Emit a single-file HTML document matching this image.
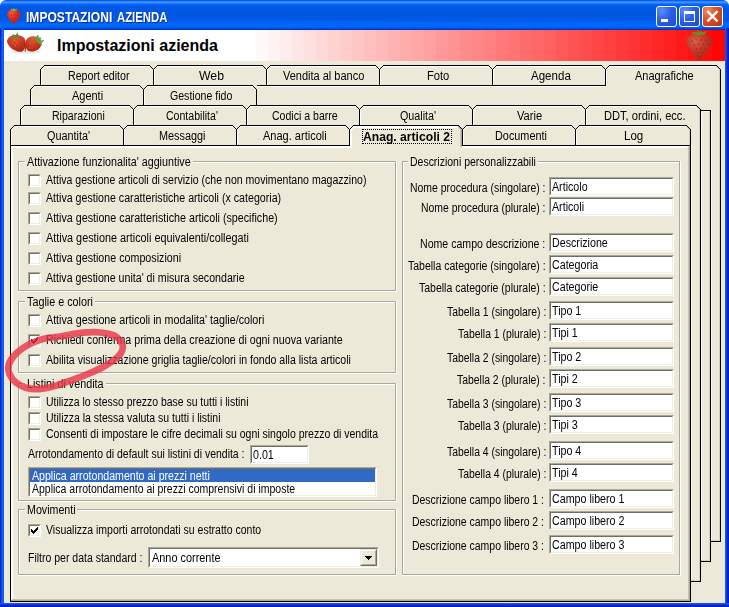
<!DOCTYPE html>
<html lang="it">
<head>
<meta charset="utf-8">
<title>IMPOSTAZIONI AZIENDA</title>
<style>
html,body{margin:0;padding:0;background:#fff;}
body{width:729px;height:607px;overflow:hidden;position:relative;font-family:"Liberation Sans",sans-serif;font-size:12px;color:#000;}
#win{position:absolute;left:0;top:0;width:729px;height:607px;overflow:hidden;border-radius:6px 6px 0 0;background:#ECE9D8;}
#tb{position:absolute;left:0;top:0;width:729px;height:30px;background:linear-gradient(to bottom,#0044D4 0px,#2E86FC 1.5px,#3C93FF 2.5px,#0A6AFF 4px,#0059E8 6px,#0057E0 12px,#0059E6 20px,#0066FA 23px,#0068FC 26px,#005AF0 28px,#0036C4 29.5px,#0030BE 30px);}
#bl,#br{position:absolute;top:28px;width:4px;height:579px;}
#bl{left:0;background:linear-gradient(to right,#0019CF 0,#0831D9 1px,#166AEE 2px,#0855DD 4px);}
#br{left:725px;background:linear-gradient(to right,#1C62EC 0,#0A3EDC 1.5px,#0021C4 3px,#001AB0 4px);}
#bb{position:absolute;left:0;top:603px;width:729px;height:4px;background:linear-gradient(to bottom,#1C62EC 0,#0A3EDC 1.5px,#0021C4 3px,#001AB0 4px);}
#hd{position:absolute;left:4px;top:30px;width:721px;height:31px;background:linear-gradient(to right,#fff 0,#fff 240px,#FFFFFF 240px,#FFFFFF 252px,#FFF9F9 252px,#FFF9F9 264px,#FFF2F2 264px,#FFF2F2 276px,#FFECEC 276px,#FFECEC 288px,#FFE6E6 288px,#FFE6E6 300px,#FFDFDF 300px,#FFDFDF 312px,#FFD9D9 312px,#FFD9D9 324px,#FFD2D2 324px,#FFD2D2 336px,#FFCCCC 336px,#FFCCCC 348px,#FFC6C6 348px,#FFC6C6 360px,#FFBFBF 360px,#FFBFBF 372px,#FFB9B9 372px,#FFB9B9 384px,#FFB2B2 384px,#FFB2B2 396px,#FFACAC 396px,#FFACAC 408px,#FFA6A6 408px,#FFA6A6 420px,#FF9F9F 420px,#FF9F9F 432px,#FF9999 432px,#FF9999 444px,#FF9393 444px,#FF9393 456px,#FF8C8C 456px,#FF8C8C 468px,#FF8686 468px,#FF8686 480px,#FF8080 480px,#FF8080 492px,#FF7979 492px,#FF7979 504px,#FF7373 504px,#FF7373 516px,#FF6C6C 516px,#FF6C6C 528px,#FF6666 528px,#FF6666 540px,#FF6060 540px,#FF6060 552px,#FF5959 552px,#FF5959 564px,#FF5353 564px,#FF5353 576px,#FF4D4D 576px,#FF4D4D 588px,#FF4646 588px,#FF4646 600px,#FF4040 600px,#FF4040 612px,#FF3939 612px,#FF3939 624px,#FF3333 624px,#FF3333 636px,#FF2D2D 636px,#FF2D2D 648px,#FF2626 648px,#FF2626 660px,#FF2020 660px,#FF2020 672px,#FF1919 672px,#FF1919 684px,#FF1313 684px,#FF1313 696px,#FF0D0D 696px,#FF0D0D 708px,#FF0606 708px,#FF0606 720px,#FF0000 720px,#FF0000 721px);}
.t{position:absolute;white-space:nowrap;line-height:16px;height:16px;transform-origin:0 50%;}
#ttl{position:absolute;left:26px;top:8px;line-height:18px;font-size:14px;font-weight:bold;color:#fff;white-space:nowrap;text-shadow:1px 1px 0 #0A2A8C;}
#h1{position:absolute;left:57px;top:35px;line-height:22px;font-size:16px;font-weight:bold;white-space:nowrap;}
.ln{position:absolute;left:0;top:0;}
.cb{position:absolute;width:11px;height:11px;background:#fff;border:1px solid;border-color:#ACA899 #fff #fff #ACA899;}
.cb::before{content:"";position:absolute;left:0;top:0;right:0;bottom:0;border:1px solid;border-color:#716F64 #F1EFE2 #F1EFE2 #716F64;}
.in{position:absolute;background:#fff;border:1px solid;border-color:#ACA899 #fff #fff #ACA899;}
.in::before{content:"";position:absolute;left:0;top:0;right:0;bottom:0;border:1px solid;border-color:#716F64 #F1EFE2 #F1EFE2 #716F64;}
.btn{position:absolute;width:15px;height:15px;background:#ECE9D8;border:1px solid;border-color:#ECE9D8 #716F64 #716F64 #ECE9D8;}
.btn::before{content:"";position:absolute;left:0;top:0;right:0;bottom:0;border:1px solid;border-color:#fff #ACA899 #ACA899 #fff;}
.wb{position:absolute;top:6px;width:19px;height:19px;border:1px solid #fff;border-radius:3px;background:radial-gradient(circle at 25% 20%,#5A8CFF 0,#2C5FE6 45%,#1F48C8 100%);}
#wc{background:radial-gradient(circle at 25% 20%,#F08A62 0,#D9512C 45%,#B8300C 100%);}
</style>
</head>
<body>
<div id="win">
<div id="tb"></div>
<div id="bl"></div><div id="br"></div><div id="bb"></div>
<div id="hd"></div>
<!-- title icon : strawberry -->
<svg style="position:absolute;left:6px;top:7px" width="16" height="18" viewBox="0 0 16 18">
<defs><radialGradient id="s0" cx="35%" cy="20%" r="85%"><stop offset="0" stop-color="#EC5A3A"/><stop offset=".5" stop-color="#D82C1C"/><stop offset="1" stop-color="#B41C10"/></radialGradient></defs>
<path d="M1.2 6.8C1 4.4 3 3 5 3.2C6.2 3.3 7 3.8 7.6 4.2C8.4 3.6 9.6 3.2 11 3.3C13.2 3.5 14.5 5.2 14.3 7.2C14.1 9.6 13.2 11.2 11.8 13C10.6 14.6 9 16.2 7.8 17.2C6.4 16.2 5 14.8 3.8 13.2C2.4 11.4 1.4 9.2 1.2 6.8Z" fill="url(#s0)"/>
<path d="M4 3.2L5.8 1.6L6.8 2.6L7.6 0.8L8.8 2.6L10.8 1.4L10.6 3.4C9.4 3.4 8.4 3.8 7.6 4.4C6.6 3.6 5.4 3.2 4 3.2Z" fill="#B0A030"/>
<g fill="#8E1408" opacity=".7"><rect x="5" y="8" width="1" height="1"/><rect x="8" y="7" width="1" height="1"/><rect x="11" y="8" width="1" height="1"/><rect x="6.5" y="11" width="1" height="1"/><rect x="9.5" y="10.5" width="1" height="1"/><rect x="8" y="13.5" width="1" height="1"/></g>
</svg>
<div id="ttl"><span style="position:absolute;left:0;top:0;transform-origin:0 50%;transform:scaleX(0.8624)">IMPOSTAZIONI</span> <span style="position:absolute;left:90.6px;top:0;transform-origin:0 50%;transform:scaleX(0.8100)">AZIENDA</span></div>
<div class="wb" style="left:656px"><div style="position:absolute;left:4px;top:12px;width:7px;height:3px;background:#fff"></div></div>
<div class="wb" style="left:679px"><div style="position:absolute;left:4px;top:4px;width:9px;height:7px;border:1px solid #fff;border-top-width:3px"></div></div>
<div class="wb" id="wc" style="left:702px"><svg width="19" height="19" viewBox="0 0 19 19" style="position:absolute;left:0;top:0"><path d="M5.2 5L13.8 13.6M13.8 5L5.2 13.6" stroke="#fff" stroke-width="2.3" stroke-linecap="square"/></svg></div>
<!-- header strawberries -->
<svg style="position:absolute;left:5px;top:31px" width="42" height="24" viewBox="0 0 42 24">
<defs><radialGradient id="s1" cx="45%" cy="15%" r="85%"><stop offset="0" stop-color="#E2583A"/><stop offset=".5" stop-color="#CC3A22"/><stop offset="1" stop-color="#A82816"/></radialGradient></defs>
<ellipse cx="21" cy="21" rx="15" ry="1.8" fill="#DCD8D0" opacity=".6"/>
<path d="M2 10.5C2.2 6.5 6 4 11 4C16 4 20.5 6.5 20.8 11C21 15 19.8 19.6 16.5 20.8C12 21.4 3.5 17.5 2 10.5Z" fill="url(#s1)"/>
<path d="M21 9.2C23 5.6 28 4.4 31.6 6C35 7.6 37 11 36 14.6C35 18.2 31 20.6 27 20.6C23.6 20.6 21.2 19.2 20.9 16C20.7 13.2 20.5 11 21 9.2Z" fill="url(#s1)"/>
<path d="M19.2 12C20.8 14 21 18 20 20.4" stroke="#8E1C0E" stroke-width="1.3" fill="none" opacity=".8"/>
<path d="M3.5 7.6L6.6 6L8 2.8L10 5L12.6 1.6L13.4 4.6L15 5.6C12 6 10.5 8 9.5 7C7.5 6.2 5.5 7.8 3.5 7.6Z" fill="#5E8A32"/>
<path d="M28.6 6.2L31.6 5.6L32.8 3.4L34 6.4L36.6 6.8L35.2 9.4L39.6 9L36.4 12L37.6 15L34.4 12.8C32.8 12.6 30.6 10.6 30.4 8.6Z" fill="#6E9838"/>
<g fill="#8C1C0E" opacity=".7"><rect x="14.5" y="11" width="1" height="1"/><rect x="16.5" y="13" width="1" height="1"/><rect x="15" y="15" width="1" height="1"/><rect x="17.5" y="10.5" width="1" height="1"/><rect x="16" y="17" width="1" height="1"/></g>
<g fill="#EE7A58" opacity=".8"><rect x="9" y="9" width="1" height="1"/><rect x="11.5" y="11" width="1" height="1"/><rect x="7" y="12" width="1" height="1"/><rect x="10" y="14" width="1" height="1"/><rect x="24.5" y="12" width="1" height="1"/><rect x="26.5" y="14.5" width="1" height="1"/><rect x="24" y="16.5" width="1" height="1"/><rect x="28" y="11" width="1" height="1"/></g>
</svg>
<div id="h1">Impostazioni azienda</div>
<!-- big strawberry right -->
<svg style="position:absolute;left:685px;top:29px" width="30" height="33" viewBox="0 0 30 33">
<defs><radialGradient id="sg" cx="35%" cy="25%" r="80%"><stop offset="0" stop-color="#D8604A"/><stop offset=".45" stop-color="#C43A2A"/><stop offset="1" stop-color="#A82618"/></radialGradient></defs>
<path d="M1.2 11.5C1.5 7.5 5 5.4 9 5.8C11.5 6 13 6.8 14 7.4C15.5 6.4 18 5.6 20.5 6C24.5 6.6 27.2 9.5 27 13C26.8 17 24 21 21 24.5C18.5 27.5 16 30 14 31.8C11.5 30 8.5 26.5 6 22.5C3.5 18.5 1 15 1.2 11.5Z" fill="url(#sg)"/>
<path d="M6 4.6L9.5 2.6L11.5 3.4L12.5 1L14.5 3.2L16 1.2L17.6 3.6L21.5 1.8L20 5.6C17.5 5.4 16 6.2 14 7.2C12 6 9 5.6 6 4.6Z" fill="#6C8A2C"/>
<g fill="#8A1C10" opacity=".75"><circle cx="7" cy="12" r=".7"/><circle cx="11" cy="10.5" r=".7"/><circle cx="16" cy="11" r=".7"/><circle cx="21" cy="11.5" r=".7"/><circle cx="9" cy="16" r=".7"/><circle cx="13.5" cy="15" r=".7"/><circle cx="18.5" cy="15.5" r=".7"/><circle cx="23" cy="15.5" r=".7"/><circle cx="11.5" cy="20" r=".7"/><circle cx="16" cy="19.5" r=".7"/><circle cx="20.5" cy="19.5" r=".7"/><circle cx="13.5" cy="24" r=".7"/><circle cx="17.5" cy="23.5" r=".7"/><circle cx="14.5" cy="28" r=".7"/></g>
</svg>
<svg class="ln" width="729" height="607" viewBox="0 0 729 607" shape-rendering="crispEdges"><rect x="44" y="65" width="106" height="1" fill="#000"/><rect x="44" y="66" width="106" height="1" fill="#FFFFFF"/><rect x="41" y="68" width="1" height="1" fill="#000"/><rect x="42" y="68" width="1" height="1" fill="#FFFFFF"/><rect x="42" y="67" width="1" height="1" fill="#000"/><rect x="43" y="67" width="1" height="1" fill="#FFFFFF"/><rect x="43" y="66" width="1" height="1" fill="#000"/><rect x="44" y="66" width="1" height="1" fill="#FFFFFF"/><rect x="152" y="68" width="1" height="1" fill="#000"/><rect x="151" y="67" width="1" height="1" fill="#000"/><rect x="150" y="66" width="1" height="1" fill="#000"/><rect x="40" y="69" width="1" height="16" fill="#000"/><rect x="41" y="69" width="1" height="16" fill="#FFFFFF"/><rect x="153" y="69" width="1" height="16" fill="#000"/><rect x="157" y="65" width="106" height="1" fill="#000"/><rect x="157" y="66" width="106" height="1" fill="#FFFFFF"/><rect x="154" y="68" width="1" height="1" fill="#000"/><rect x="155" y="68" width="1" height="1" fill="#FFFFFF"/><rect x="155" y="67" width="1" height="1" fill="#000"/><rect x="156" y="67" width="1" height="1" fill="#FFFFFF"/><rect x="156" y="66" width="1" height="1" fill="#000"/><rect x="157" y="66" width="1" height="1" fill="#FFFFFF"/><rect x="265" y="68" width="1" height="1" fill="#000"/><rect x="264" y="67" width="1" height="1" fill="#000"/><rect x="263" y="66" width="1" height="1" fill="#000"/><rect x="153" y="69" width="1" height="16" fill="#000"/><rect x="154" y="69" width="1" height="16" fill="#FFFFFF"/><rect x="266" y="69" width="1" height="16" fill="#000"/><rect x="270" y="65" width="106" height="1" fill="#000"/><rect x="270" y="66" width="106" height="1" fill="#FFFFFF"/><rect x="267" y="68" width="1" height="1" fill="#000"/><rect x="268" y="68" width="1" height="1" fill="#FFFFFF"/><rect x="268" y="67" width="1" height="1" fill="#000"/><rect x="269" y="67" width="1" height="1" fill="#FFFFFF"/><rect x="269" y="66" width="1" height="1" fill="#000"/><rect x="270" y="66" width="1" height="1" fill="#FFFFFF"/><rect x="378" y="68" width="1" height="1" fill="#000"/><rect x="377" y="67" width="1" height="1" fill="#000"/><rect x="376" y="66" width="1" height="1" fill="#000"/><rect x="266" y="69" width="1" height="16" fill="#000"/><rect x="267" y="69" width="1" height="16" fill="#FFFFFF"/><rect x="379" y="69" width="1" height="16" fill="#000"/><rect x="383" y="65" width="106" height="1" fill="#000"/><rect x="383" y="66" width="106" height="1" fill="#FFFFFF"/><rect x="380" y="68" width="1" height="1" fill="#000"/><rect x="381" y="68" width="1" height="1" fill="#FFFFFF"/><rect x="381" y="67" width="1" height="1" fill="#000"/><rect x="382" y="67" width="1" height="1" fill="#FFFFFF"/><rect x="382" y="66" width="1" height="1" fill="#000"/><rect x="383" y="66" width="1" height="1" fill="#FFFFFF"/><rect x="491" y="68" width="1" height="1" fill="#000"/><rect x="490" y="67" width="1" height="1" fill="#000"/><rect x="489" y="66" width="1" height="1" fill="#000"/><rect x="379" y="69" width="1" height="16" fill="#000"/><rect x="380" y="69" width="1" height="16" fill="#FFFFFF"/><rect x="492" y="69" width="1" height="16" fill="#000"/><rect x="496" y="65" width="106" height="1" fill="#000"/><rect x="496" y="66" width="106" height="1" fill="#FFFFFF"/><rect x="493" y="68" width="1" height="1" fill="#000"/><rect x="494" y="68" width="1" height="1" fill="#FFFFFF"/><rect x="494" y="67" width="1" height="1" fill="#000"/><rect x="495" y="67" width="1" height="1" fill="#FFFFFF"/><rect x="495" y="66" width="1" height="1" fill="#000"/><rect x="496" y="66" width="1" height="1" fill="#FFFFFF"/><rect x="604" y="68" width="1" height="1" fill="#000"/><rect x="603" y="67" width="1" height="1" fill="#000"/><rect x="602" y="66" width="1" height="1" fill="#000"/><rect x="492" y="69" width="1" height="16" fill="#000"/><rect x="493" y="69" width="1" height="16" fill="#FFFFFF"/><rect x="605" y="69" width="1" height="16" fill="#000"/><rect x="609" y="65" width="108" height="1" fill="#000"/><rect x="609" y="66" width="108" height="1" fill="#FFFFFF"/><rect x="606" y="68" width="1" height="1" fill="#000"/><rect x="607" y="68" width="1" height="1" fill="#FFFFFF"/><rect x="607" y="67" width="1" height="1" fill="#000"/><rect x="608" y="67" width="1" height="1" fill="#FFFFFF"/><rect x="608" y="66" width="1" height="1" fill="#000"/><rect x="609" y="66" width="1" height="1" fill="#FFFFFF"/><rect x="719" y="68" width="1" height="1" fill="#000"/><rect x="718" y="68" width="1" height="1" fill="#D0CCBC"/><rect x="718" y="67" width="1" height="1" fill="#000"/><rect x="717" y="67" width="1" height="1" fill="#D0CCBC"/><rect x="717" y="66" width="1" height="1" fill="#000"/><rect x="716" y="66" width="1" height="1" fill="#D0CCBC"/><rect x="605" y="69" width="1" height="16" fill="#000"/><rect x="606" y="69" width="1" height="16" fill="#FFFFFF"/><rect x="720" y="69" width="1" height="16" fill="#000"/><rect x="719" y="69" width="1" height="16" fill="#D0CCBC"/><rect x="34" y="85" width="106" height="1" fill="#000"/><rect x="34" y="86" width="106" height="1" fill="#FFFFFF"/><rect x="31" y="88" width="1" height="1" fill="#000"/><rect x="32" y="88" width="1" height="1" fill="#FFFFFF"/><rect x="32" y="87" width="1" height="1" fill="#000"/><rect x="33" y="87" width="1" height="1" fill="#FFFFFF"/><rect x="33" y="86" width="1" height="1" fill="#000"/><rect x="34" y="86" width="1" height="1" fill="#FFFFFF"/><rect x="142" y="88" width="1" height="1" fill="#000"/><rect x="141" y="87" width="1" height="1" fill="#000"/><rect x="140" y="86" width="1" height="1" fill="#000"/><rect x="30" y="89" width="1" height="16" fill="#000"/><rect x="31" y="89" width="1" height="16" fill="#FFFFFF"/><rect x="143" y="89" width="1" height="16" fill="#000"/><rect x="147" y="85" width="106" height="1" fill="#000"/><rect x="147" y="86" width="106" height="1" fill="#FFFFFF"/><rect x="144" y="88" width="1" height="1" fill="#000"/><rect x="145" y="88" width="1" height="1" fill="#FFFFFF"/><rect x="145" y="87" width="1" height="1" fill="#000"/><rect x="146" y="87" width="1" height="1" fill="#FFFFFF"/><rect x="146" y="86" width="1" height="1" fill="#000"/><rect x="147" y="86" width="1" height="1" fill="#FFFFFF"/><rect x="255" y="88" width="1" height="1" fill="#000"/><rect x="254" y="87" width="1" height="1" fill="#000"/><rect x="253" y="86" width="1" height="1" fill="#000"/><rect x="143" y="89" width="1" height="16" fill="#000"/><rect x="144" y="89" width="1" height="16" fill="#FFFFFF"/><rect x="256" y="89" width="1" height="16" fill="#000"/><rect x="24" y="105" width="106" height="1" fill="#000"/><rect x="24" y="106" width="106" height="1" fill="#FFFFFF"/><rect x="21" y="108" width="1" height="1" fill="#000"/><rect x="22" y="108" width="1" height="1" fill="#FFFFFF"/><rect x="22" y="107" width="1" height="1" fill="#000"/><rect x="23" y="107" width="1" height="1" fill="#FFFFFF"/><rect x="23" y="106" width="1" height="1" fill="#000"/><rect x="24" y="106" width="1" height="1" fill="#FFFFFF"/><rect x="132" y="108" width="1" height="1" fill="#000"/><rect x="131" y="107" width="1" height="1" fill="#000"/><rect x="130" y="106" width="1" height="1" fill="#000"/><rect x="20" y="109" width="1" height="16" fill="#000"/><rect x="21" y="109" width="1" height="16" fill="#FFFFFF"/><rect x="133" y="109" width="1" height="16" fill="#000"/><rect x="137" y="105" width="106" height="1" fill="#000"/><rect x="137" y="106" width="106" height="1" fill="#FFFFFF"/><rect x="134" y="108" width="1" height="1" fill="#000"/><rect x="135" y="108" width="1" height="1" fill="#FFFFFF"/><rect x="135" y="107" width="1" height="1" fill="#000"/><rect x="136" y="107" width="1" height="1" fill="#FFFFFF"/><rect x="136" y="106" width="1" height="1" fill="#000"/><rect x="137" y="106" width="1" height="1" fill="#FFFFFF"/><rect x="245" y="108" width="1" height="1" fill="#000"/><rect x="244" y="107" width="1" height="1" fill="#000"/><rect x="243" y="106" width="1" height="1" fill="#000"/><rect x="133" y="109" width="1" height="16" fill="#000"/><rect x="134" y="109" width="1" height="16" fill="#FFFFFF"/><rect x="246" y="109" width="1" height="16" fill="#000"/><rect x="250" y="105" width="106" height="1" fill="#000"/><rect x="250" y="106" width="106" height="1" fill="#FFFFFF"/><rect x="247" y="108" width="1" height="1" fill="#000"/><rect x="248" y="108" width="1" height="1" fill="#FFFFFF"/><rect x="248" y="107" width="1" height="1" fill="#000"/><rect x="249" y="107" width="1" height="1" fill="#FFFFFF"/><rect x="249" y="106" width="1" height="1" fill="#000"/><rect x="250" y="106" width="1" height="1" fill="#FFFFFF"/><rect x="358" y="108" width="1" height="1" fill="#000"/><rect x="357" y="107" width="1" height="1" fill="#000"/><rect x="356" y="106" width="1" height="1" fill="#000"/><rect x="246" y="109" width="1" height="16" fill="#000"/><rect x="247" y="109" width="1" height="16" fill="#FFFFFF"/><rect x="359" y="109" width="1" height="16" fill="#000"/><rect x="363" y="105" width="106" height="1" fill="#000"/><rect x="363" y="106" width="106" height="1" fill="#FFFFFF"/><rect x="360" y="108" width="1" height="1" fill="#000"/><rect x="361" y="108" width="1" height="1" fill="#FFFFFF"/><rect x="361" y="107" width="1" height="1" fill="#000"/><rect x="362" y="107" width="1" height="1" fill="#FFFFFF"/><rect x="362" y="106" width="1" height="1" fill="#000"/><rect x="363" y="106" width="1" height="1" fill="#FFFFFF"/><rect x="471" y="108" width="1" height="1" fill="#000"/><rect x="470" y="107" width="1" height="1" fill="#000"/><rect x="469" y="106" width="1" height="1" fill="#000"/><rect x="359" y="109" width="1" height="16" fill="#000"/><rect x="360" y="109" width="1" height="16" fill="#FFFFFF"/><rect x="472" y="109" width="1" height="16" fill="#000"/><rect x="476" y="105" width="106" height="1" fill="#000"/><rect x="476" y="106" width="106" height="1" fill="#FFFFFF"/><rect x="473" y="108" width="1" height="1" fill="#000"/><rect x="474" y="108" width="1" height="1" fill="#FFFFFF"/><rect x="474" y="107" width="1" height="1" fill="#000"/><rect x="475" y="107" width="1" height="1" fill="#FFFFFF"/><rect x="475" y="106" width="1" height="1" fill="#000"/><rect x="476" y="106" width="1" height="1" fill="#FFFFFF"/><rect x="584" y="108" width="1" height="1" fill="#000"/><rect x="583" y="107" width="1" height="1" fill="#000"/><rect x="582" y="106" width="1" height="1" fill="#000"/><rect x="472" y="109" width="1" height="16" fill="#000"/><rect x="473" y="109" width="1" height="16" fill="#FFFFFF"/><rect x="585" y="109" width="1" height="16" fill="#000"/><rect x="589" y="105" width="108" height="1" fill="#000"/><rect x="589" y="106" width="108" height="1" fill="#FFFFFF"/><rect x="586" y="108" width="1" height="1" fill="#000"/><rect x="587" y="108" width="1" height="1" fill="#FFFFFF"/><rect x="587" y="107" width="1" height="1" fill="#000"/><rect x="588" y="107" width="1" height="1" fill="#FFFFFF"/><rect x="588" y="106" width="1" height="1" fill="#000"/><rect x="589" y="106" width="1" height="1" fill="#FFFFFF"/><rect x="699" y="108" width="1" height="1" fill="#000"/><rect x="698" y="108" width="1" height="1" fill="#D0CCBC"/><rect x="698" y="107" width="1" height="1" fill="#000"/><rect x="697" y="107" width="1" height="1" fill="#D0CCBC"/><rect x="697" y="106" width="1" height="1" fill="#000"/><rect x="696" y="106" width="1" height="1" fill="#D0CCBC"/><rect x="585" y="109" width="1" height="16" fill="#000"/><rect x="586" y="109" width="1" height="16" fill="#FFFFFF"/><rect x="700" y="109" width="1" height="16" fill="#000"/><rect x="699" y="109" width="1" height="16" fill="#D0CCBC"/><rect x="14" y="125" width="106" height="1" fill="#000"/><rect x="14" y="126" width="106" height="1" fill="#FFFFFF"/><rect x="11" y="128" width="1" height="1" fill="#000"/><rect x="12" y="128" width="1" height="1" fill="#FFFFFF"/><rect x="12" y="127" width="1" height="1" fill="#000"/><rect x="13" y="127" width="1" height="1" fill="#FFFFFF"/><rect x="13" y="126" width="1" height="1" fill="#000"/><rect x="14" y="126" width="1" height="1" fill="#FFFFFF"/><rect x="122" y="128" width="1" height="1" fill="#000"/><rect x="121" y="127" width="1" height="1" fill="#000"/><rect x="120" y="126" width="1" height="1" fill="#000"/><rect x="10" y="129" width="1" height="16" fill="#000"/><rect x="11" y="129" width="1" height="16" fill="#FFFFFF"/><rect x="123" y="129" width="1" height="16" fill="#000"/><rect x="127" y="125" width="106" height="1" fill="#000"/><rect x="127" y="126" width="106" height="1" fill="#FFFFFF"/><rect x="124" y="128" width="1" height="1" fill="#000"/><rect x="125" y="128" width="1" height="1" fill="#FFFFFF"/><rect x="125" y="127" width="1" height="1" fill="#000"/><rect x="126" y="127" width="1" height="1" fill="#FFFFFF"/><rect x="126" y="126" width="1" height="1" fill="#000"/><rect x="127" y="126" width="1" height="1" fill="#FFFFFF"/><rect x="235" y="128" width="1" height="1" fill="#000"/><rect x="234" y="127" width="1" height="1" fill="#000"/><rect x="233" y="126" width="1" height="1" fill="#000"/><rect x="123" y="129" width="1" height="16" fill="#000"/><rect x="124" y="129" width="1" height="16" fill="#FFFFFF"/><rect x="236" y="129" width="1" height="16" fill="#000"/><rect x="240" y="125" width="106" height="1" fill="#000"/><rect x="240" y="126" width="106" height="1" fill="#FFFFFF"/><rect x="237" y="128" width="1" height="1" fill="#000"/><rect x="238" y="128" width="1" height="1" fill="#FFFFFF"/><rect x="238" y="127" width="1" height="1" fill="#000"/><rect x="239" y="127" width="1" height="1" fill="#FFFFFF"/><rect x="239" y="126" width="1" height="1" fill="#000"/><rect x="240" y="126" width="1" height="1" fill="#FFFFFF"/><rect x="348" y="128" width="1" height="1" fill="#000"/><rect x="347" y="127" width="1" height="1" fill="#000"/><rect x="346" y="126" width="1" height="1" fill="#000"/><rect x="236" y="129" width="1" height="16" fill="#000"/><rect x="237" y="129" width="1" height="16" fill="#FFFFFF"/><rect x="349" y="129" width="1" height="16" fill="#000"/><rect x="353" y="125" width="106" height="1" fill="#000"/><rect x="353" y="126" width="106" height="1" fill="#FFFFFF"/><rect x="352" y="127" width="106" height="1" fill="#FFFFFF"/><rect x="350" y="128" width="1" height="1" fill="#000"/><rect x="351" y="128" width="1" height="1" fill="#FFFFFF"/><rect x="352" y="128" width="1" height="1" fill="#FFFFFF"/><rect x="351" y="127" width="1" height="1" fill="#000"/><rect x="352" y="127" width="1" height="1" fill="#FFFFFF"/><rect x="353" y="127" width="1" height="1" fill="#FFFFFF"/><rect x="352" y="126" width="1" height="1" fill="#000"/><rect x="353" y="126" width="1" height="1" fill="#FFFFFF"/><rect x="354" y="126" width="1" height="1" fill="#FFFFFF"/><rect x="461" y="128" width="1" height="1" fill="#000"/><rect x="460" y="128" width="1" height="1" fill="#ACA899"/><rect x="459" y="128" width="1" height="1" fill="#C8C4B4"/><rect x="460" y="127" width="1" height="1" fill="#000"/><rect x="459" y="127" width="1" height="1" fill="#ACA899"/><rect x="458" y="127" width="1" height="1" fill="#C8C4B4"/><rect x="459" y="126" width="1" height="1" fill="#000"/><rect x="458" y="126" width="1" height="1" fill="#ACA899"/><rect x="457" y="126" width="1" height="1" fill="#C8C4B4"/><rect x="349" y="129" width="1" height="16" fill="#000"/><rect x="350" y="129" width="1" height="16" fill="#FFFFFF"/><rect x="351" y="128" width="1" height="19" fill="#FFFFFF"/><rect x="350" y="145" width="1" height="2" fill="#FFFFFF"/><rect x="462" y="129" width="1" height="16" fill="#000"/><rect x="461" y="129" width="1" height="16" fill="#ACA899"/><rect x="460" y="129" width="1" height="18" fill="#C8C4B4"/><rect x="461" y="145" width="1" height="2" fill="#ACA899"/><rect x="466" y="125" width="106" height="1" fill="#000"/><rect x="466" y="126" width="106" height="1" fill="#FFFFFF"/><rect x="463" y="128" width="1" height="1" fill="#000"/><rect x="464" y="128" width="1" height="1" fill="#FFFFFF"/><rect x="464" y="127" width="1" height="1" fill="#000"/><rect x="465" y="127" width="1" height="1" fill="#FFFFFF"/><rect x="465" y="126" width="1" height="1" fill="#000"/><rect x="466" y="126" width="1" height="1" fill="#FFFFFF"/><rect x="574" y="128" width="1" height="1" fill="#000"/><rect x="573" y="127" width="1" height="1" fill="#000"/><rect x="572" y="126" width="1" height="1" fill="#000"/><rect x="462" y="129" width="1" height="16" fill="#000"/><rect x="463" y="129" width="1" height="16" fill="#FFFFFF"/><rect x="575" y="129" width="1" height="16" fill="#000"/><rect x="579" y="125" width="108" height="1" fill="#000"/><rect x="579" y="126" width="108" height="1" fill="#FFFFFF"/><rect x="576" y="128" width="1" height="1" fill="#000"/><rect x="577" y="128" width="1" height="1" fill="#FFFFFF"/><rect x="577" y="127" width="1" height="1" fill="#000"/><rect x="578" y="127" width="1" height="1" fill="#FFFFFF"/><rect x="578" y="126" width="1" height="1" fill="#000"/><rect x="579" y="126" width="1" height="1" fill="#FFFFFF"/><rect x="689" y="128" width="1" height="1" fill="#000"/><rect x="688" y="128" width="1" height="1" fill="#D0CCBC"/><rect x="688" y="127" width="1" height="1" fill="#000"/><rect x="687" y="127" width="1" height="1" fill="#D0CCBC"/><rect x="687" y="126" width="1" height="1" fill="#000"/><rect x="686" y="126" width="1" height="1" fill="#D0CCBC"/><rect x="575" y="129" width="1" height="16" fill="#000"/><rect x="576" y="129" width="1" height="16" fill="#FFFFFF"/><rect x="690" y="129" width="1" height="16" fill="#000"/><rect x="689" y="129" width="1" height="16" fill="#D0CCBC"/><rect x="257" y="85" width="349" height="1" fill="#000"/><rect x="257" y="86" width="348" height="1" fill="#FFFFFF"/><rect x="720" y="85" width="1" height="457" fill="#000"/><rect x="719" y="85" width="1" height="456" fill="#D4D0C0"/><rect x="711" y="541" width="10" height="1" fill="#000"/><rect x="711" y="540" width="9" height="1" fill="#D4D0C0"/><rect x="701" y="110" width="10" height="1" fill="#000"/><rect x="710" y="110" width="1" height="452" fill="#000"/><rect x="709" y="111" width="1" height="450" fill="#D4D0C0"/><rect x="701" y="561" width="10" height="1" fill="#000"/><rect x="701" y="560" width="9" height="1" fill="#D4D0C0"/><rect x="701" y="111" width="8" height="1" fill="#FBFAF5"/><rect x="701" y="111" width="1" height="449" fill="#FBFAF5"/><rect x="700" y="125" width="1" height="457" fill="#000"/><rect x="699" y="125" width="1" height="456" fill="#D4D0C0"/><rect x="691" y="581" width="10" height="1" fill="#000"/><rect x="691" y="580" width="9" height="1" fill="#D4D0C0"/><rect x="691" y="146" width="1" height="434" fill="#FBFAF5"/><rect x="711" y="112" width="1" height="428" fill="#FBFAF5"/><rect x="10" y="145" width="340" height="1" fill="#000"/><rect x="462" y="145" width="229" height="1" fill="#000"/><rect x="11" y="146" width="341" height="1" fill="#FFFFFF"/><rect x="462" y="146" width="226" height="1" fill="#FFFFFF"/><rect x="11" y="147" width="341" height="1" fill="#FFFFFF"/><rect x="462" y="147" width="225" height="1" fill="#FFFFFF"/><rect x="10" y="145" width="1" height="457" fill="#000"/><rect x="11" y="146" width="1" height="454" fill="#FFFFFF"/><rect x="12" y="146" width="1" height="453" fill="#FFFFFF"/><rect x="690" y="145" width="1" height="457" fill="#000"/><rect x="689" y="146" width="1" height="455" fill="#ACA899"/><rect x="688" y="147" width="1" height="453" fill="#C8C4B4"/><rect x="10" y="601" width="681" height="1" fill="#000"/><rect x="11" y="600" width="679" height="1" fill="#ACA899"/><rect x="12" y="599" width="677" height="1" fill="#C8C4B4"/><rect x="18" y="161" width="378" height="1" fill="#ACA899"/><rect x="19" y="162" width="376" height="1" fill="#FFFFFF"/><rect x="18" y="161" width="1" height="130" fill="#ACA899"/><rect x="19" y="162" width="1" height="128" fill="#FFFFFF"/><rect x="18" y="290" width="378" height="1" fill="#ACA899"/><rect x="18" y="291" width="379" height="1" fill="#FFFFFF"/><rect x="395" y="161" width="1" height="130" fill="#ACA899"/><rect x="396" y="161" width="1" height="131" fill="#FFFFFF"/><rect x="25" y="161" width="167.6" height="2" fill="#ECE9D8"/><rect x="18" y="301" width="378" height="1" fill="#ACA899"/><rect x="19" y="302" width="376" height="1" fill="#FFFFFF"/><rect x="18" y="301" width="1" height="72" fill="#ACA899"/><rect x="19" y="302" width="1" height="70" fill="#FFFFFF"/><rect x="18" y="372" width="378" height="1" fill="#ACA899"/><rect x="18" y="373" width="379" height="1" fill="#FFFFFF"/><rect x="395" y="301" width="1" height="72" fill="#ACA899"/><rect x="396" y="301" width="1" height="73" fill="#FFFFFF"/><rect x="25" y="301" width="70.0" height="2" fill="#ECE9D8"/><rect x="18" y="383" width="378" height="1" fill="#ACA899"/><rect x="19" y="384" width="376" height="1" fill="#FFFFFF"/><rect x="18" y="383" width="1" height="118" fill="#ACA899"/><rect x="19" y="384" width="1" height="116" fill="#FFFFFF"/><rect x="18" y="500" width="378" height="1" fill="#ACA899"/><rect x="18" y="501" width="379" height="1" fill="#FFFFFF"/><rect x="395" y="383" width="1" height="118" fill="#ACA899"/><rect x="396" y="383" width="1" height="119" fill="#FFFFFF"/><rect x="25" y="383" width="80.5" height="2" fill="#ECE9D8"/><rect x="18" y="509" width="378" height="1" fill="#ACA899"/><rect x="19" y="510" width="376" height="1" fill="#FFFFFF"/><rect x="18" y="509" width="1" height="66" fill="#ACA899"/><rect x="19" y="510" width="1" height="64" fill="#FFFFFF"/><rect x="18" y="574" width="378" height="1" fill="#ACA899"/><rect x="18" y="575" width="379" height="1" fill="#FFFFFF"/><rect x="395" y="509" width="1" height="66" fill="#ACA899"/><rect x="396" y="509" width="1" height="67" fill="#FFFFFF"/><rect x="24.8" y="509" width="52.6" height="2" fill="#ECE9D8"/><rect x="402" y="161" width="278" height="1" fill="#ACA899"/><rect x="403" y="162" width="276" height="1" fill="#FFFFFF"/><rect x="402" y="161" width="1" height="414" fill="#ACA899"/><rect x="403" y="162" width="1" height="412" fill="#FFFFFF"/><rect x="402" y="574" width="278" height="1" fill="#ACA899"/><rect x="402" y="575" width="279" height="1" fill="#FFFFFF"/><rect x="679" y="161" width="1" height="414" fill="#ACA899"/><rect x="680" y="161" width="1" height="415" fill="#FFFFFF"/><rect x="408.4" y="161" width="129.8" height="2" fill="#ECE9D8"/></svg>
<span class="t" style="left:68.20px;top:67.84px;transform:scaleX(0.8866)">Report editor</span>
<span class="t" style="left:199.20px;top:67.84px;transform:scaleX(1.0222)">Web</span>
<span class="t" style="left:282.50px;top:67.84px;transform:scaleX(0.9161)">Vendita al banco</span>
<span class="t" style="left:426.80px;top:67.84px;transform:scaleX(0.9287)">Foto</span>
<span class="t" style="left:530.90px;top:67.84px;transform:scaleX(0.9620)">Agenda</span>
<span class="t" style="left:635.10px;top:67.84px;transform:scaleX(0.9166)">Anagrafiche</span>
<span class="t" style="left:71.70px;top:87.84px;transform:scaleX(0.9140)">Agenti</span>
<span class="t" style="left:169.50px;top:87.84px;transform:scaleX(0.8810)">Gestione fido</span>
<span class="t" style="left:51.50px;top:107.84px;transform:scaleX(0.8796)">Riparazioni</span>
<span class="t" style="left:166.00px;top:107.84px;transform:scaleX(0.8798)">Contabilita'</span>
<span class="t" style="left:272.20px;top:107.84px;transform:scaleX(0.8795)">Codici a barre</span>
<span class="t" style="left:399.90px;top:107.84px;transform:scaleX(0.8955)">Qualita'</span>
<span class="t" style="left:516.50px;top:107.84px;transform:scaleX(0.9291)">Varie</span>
<span class="t" style="left:603.90px;top:107.84px;transform:scaleX(0.9259)">DDT, ordini, ecc.</span>
<span class="t" style="left:46.50px;top:127.84px;transform:scaleX(0.9023)">Quantita'</span>
<span class="t" style="left:159.10px;top:127.84px;transform:scaleX(0.9035)">Messaggi</span>
<span class="t" style="left:262.80px;top:127.84px;transform:scaleX(0.9183)">Anag. articoli</span>
<span class="t" style="left:363.30px;top:128.84px;transform:scaleX(1.0114);font-weight:bold">Anag. articoli 2</span>
<div style="position:absolute;left:362px;top:129px;width:88px;height:13px;border:1px dotted #000"></div>
<span class="t" style="left:495.20px;top:127.84px;transform:scaleX(0.9048)">Documenti</span>
<span class="t" style="left:623.60px;top:127.84px;transform:scaleX(0.9640)">Log</span>
<span class="t" style="left:27.00px;top:153.84px;transform:scaleX(0.8936)">Attivazione funzionalita' aggiuntive</span>
<span class="t" style="left:27.00px;top:293.84px;transform:scaleX(0.8995)">Taglie e colori</span>
<span class="t" style="left:27.00px;top:375.84px;transform:scaleX(0.8960)">Listini di vendita</span>
<span class="t" style="left:26.80px;top:501.84px;transform:scaleX(0.8888)">Movimenti</span>
<span class="t" style="left:410.40px;top:153.84px;transform:scaleX(0.8732)">Descrizioni personalizzabili</span>
<div class="cb" style="left:28px;top:174px"></div>
<span class="t" style="left:46.00px;top:171.84px;transform:scaleX(0.8800)">Attiva gestione articoli di servizio (che non movimentano magazzino)</span>
<div class="cb" style="left:28px;top:192px"></div>
<span class="t" style="left:46.00px;top:189.84px;transform:scaleX(0.8880)">Attiva gestione caratteristiche articoli (x categoria)</span>
<div class="cb" style="left:28px;top:212px"></div>
<span class="t" style="left:46.00px;top:209.84px;transform:scaleX(0.8930)">Attiva gestione caratteristiche articoli (specifiche)</span>
<div class="cb" style="left:28px;top:232px"></div>
<span class="t" style="left:46.00px;top:229.84px;transform:scaleX(0.9030)">Attiva gestione articoli equivalenti/collegati</span>
<div class="cb" style="left:28px;top:252px"></div>
<span class="t" style="left:46.00px;top:249.84px;transform:scaleX(0.8920)">Attiva gestione composizioni</span>
<div class="cb" style="left:28px;top:272px"></div>
<span class="t" style="left:46.00px;top:269.84px;transform:scaleX(0.8850)">Attiva gestione unita' di misura secondarie</span>
<div class="cb" style="left:28px;top:314px"></div>
<span class="t" style="left:46.00px;top:311.84px;transform:scaleX(0.8930)">Attiva gestione articoli in modalita' taglie/colori</span>
<div class="cb" style="left:28px;top:334px"><svg width="7" height="7" viewBox="0 0 7 7" style="position:absolute;left:2px;top:2px" shape-rendering="crispEdges"><path d="M0 2h1v1h1v1h1v-1h1v-1h1v-1h1v-1h1v3h-1v1h-1v1h-1v1h-1v1h-1v-1h-1v-1h-1z" fill="#000"/></svg></div>
<span class="t" style="left:46.00px;top:331.84px;transform:scaleX(0.8880)">Richiedi conferma prima della creazione di ogni nuova variante</span>
<div class="cb" style="left:28px;top:354px"></div>
<span class="t" style="left:46.00px;top:351.84px;transform:scaleX(0.8790)">Abilita visualizzazione griglia taglie/colori in fondo alla lista articoli</span>
<div class="cb" style="left:28px;top:396px"></div>
<span class="t" style="left:46.00px;top:393.84px;transform:scaleX(0.8700)">Utilizza lo stesso prezzo base su tutti i listini</span>
<div class="cb" style="left:28px;top:412px"></div>
<span class="t" style="left:46.00px;top:409.84px;transform:scaleX(0.8750)">Utilizza la stessa valuta su tutti i listini</span>
<div class="cb" style="left:28px;top:428px"></div>
<span class="t" style="left:46.00px;top:425.84px;transform:scaleX(0.8750)">Consenti di impostare le cifre decimali su ogni singolo prezzo di vendita</span>
<div class="cb" style="left:28px;top:524px"><svg width="7" height="7" viewBox="0 0 7 7" style="position:absolute;left:2px;top:2px" shape-rendering="crispEdges"><path d="M0 2h1v1h1v1h1v-1h1v-1h1v-1h1v-1h1v3h-1v1h-1v1h-1v1h-1v1h-1v-1h-1v-1h-1z" fill="#000"/></svg></div>
<span class="t" style="left:46.00px;top:521.84px;transform:scaleX(0.8750)">Visualizza importi arrotondati su estratto conto</span>
<span class="t" style="left:28.00px;top:445.84px;transform:scaleX(0.8725)">Arrotondamento di default sui listini di vendita :</span>
<span class="t" style="left:28.00px;top:549.84px;transform:scaleX(0.8750)">Filtro per data standard :</span>
<div class="in" style="left:250px;top:445px;width:57px;height:17px"></div>
<span class="t" style="left:253.00px;top:446.84px;transform:scaleX(0.8900)">0.01</span>
<div class="in" style="left:28px;top:467px;width:347px;height:28px"></div>
<div style="position:absolute;left:30px;top:469px;width:345px;height:13px;background:#316AC5"></div>
<span class="t" style="left:32.00px;top:467.84px;transform:scaleX(0.8830);color:#fff">Applica arrotondamento ai prezzi netti</span>
<span class="t" style="left:32.00px;top:480.84px;transform:scaleX(0.8750)">Applica arrotondamento ai prezzi comprensivi di imposte</span>
<div class="in" style="left:148px;top:547px;width:229px;height:19px"></div>
<div class="btn" style="left:360px;top:549px"><svg width="7" height="4" viewBox="0 0 7 4" style="position:absolute;left:4px;top:6px" shape-rendering="crispEdges"><path d="M0 0h7v1h-1v1h-1v1h-1v1h-1v-1h-1v-1h-1v-1h-1z" fill="#000"/></svg></div>
<span class="t" style="left:151.50px;top:549.84px;transform:scaleX(0.9087)">Anno corrente</span>
<div class="in" style="left:549px;top:177px;width:123px;height:17px"></div>
<span class="t" style="left:552.00px;top:178.84px;transform:scaleX(0.8900)">Articolo</span>
<span class="t" style="left:409.90px;top:179.84px;transform:scaleX(0.8682)">Nome procedura (singolare) :</span>
<div class="in" style="left:549px;top:197px;width:123px;height:17px"></div>
<span class="t" style="left:552.00px;top:198.84px;transform:scaleX(0.8900)">Articoli</span>
<span class="t" style="left:420.90px;top:199.84px;transform:scaleX(0.8682)">Nome procedura (plurale) :</span>
<div class="in" style="left:549px;top:233px;width:123px;height:17px"></div>
<span class="t" style="left:552.00px;top:234.84px;transform:scaleX(0.8900)">Descrizione</span>
<span class="t" style="left:419.80px;top:235.84px;transform:scaleX(0.8820)">Nome campo descrizione :</span>
<div class="in" style="left:549px;top:255px;width:123px;height:17px"></div>
<span class="t" style="left:552.00px;top:256.84px;transform:scaleX(0.8900)">Categoria</span>
<span class="t" style="left:407.70px;top:257.84px;transform:scaleX(0.8747)">Tabella categorie (singolare) :</span>
<div class="in" style="left:549px;top:277px;width:123px;height:17px"></div>
<span class="t" style="left:552.00px;top:278.84px;transform:scaleX(0.8900)">Categorie</span>
<span class="t" style="left:418.70px;top:279.84px;transform:scaleX(0.8753)">Tabella categorie (plurale) :</span>
<div class="in" style="left:549px;top:301px;width:123px;height:17px"></div>
<span class="t" style="left:552.00px;top:302.84px;transform:scaleX(0.8900)">Tipo 1</span>
<span class="t" style="left:446.60px;top:303.84px;transform:scaleX(0.8655)">Tabella 1 (singolare) :</span>
<div class="in" style="left:549px;top:323px;width:123px;height:17px"></div>
<span class="t" style="left:552.00px;top:324.84px;transform:scaleX(0.8900)">Tipi 1</span>
<span class="t" style="left:457.60px;top:325.84px;transform:scaleX(0.8652)">Tabella 1 (plurale) :</span>
<div class="in" style="left:549px;top:347px;width:123px;height:17px"></div>
<span class="t" style="left:552.00px;top:348.84px;transform:scaleX(0.8900)">Tipo 2</span>
<span class="t" style="left:446.60px;top:349.84px;transform:scaleX(0.8655)">Tabella 2 (singolare) :</span>
<div class="in" style="left:549px;top:369px;width:123px;height:17px"></div>
<span class="t" style="left:552.00px;top:370.84px;transform:scaleX(0.8900)">Tipi 2</span>
<span class="t" style="left:457.00px;top:371.84px;transform:scaleX(0.8672)">Tabella 2 (plurale) :</span>
<div class="in" style="left:549px;top:393px;width:123px;height:17px"></div>
<span class="t" style="left:552.00px;top:394.84px;transform:scaleX(0.8900)">Tipo 3</span>
<span class="t" style="left:446.60px;top:395.84px;transform:scaleX(0.8655)">Tabella 3 (singolare) :</span>
<div class="in" style="left:549px;top:415px;width:123px;height:17px"></div>
<span class="t" style="left:552.00px;top:416.84px;transform:scaleX(0.8900)">Tipi 3</span>
<span class="t" style="left:457.50px;top:417.84px;transform:scaleX(0.8662)">Tabella 3 (plurale) :</span>
<div class="in" style="left:549px;top:441px;width:123px;height:17px"></div>
<span class="t" style="left:552.00px;top:442.84px;transform:scaleX(0.8900)">Tipo 4</span>
<span class="t" style="left:446.50px;top:443.84px;transform:scaleX(0.8664)">Tabella 4 (singolare) :</span>
<div class="in" style="left:549px;top:463px;width:123px;height:17px"></div>
<span class="t" style="left:552.00px;top:464.84px;transform:scaleX(0.8900)">Tipi 4</span>
<span class="t" style="left:457.50px;top:465.84px;transform:scaleX(0.8662)">Tabella 4 (plurale) :</span>
<div class="in" style="left:549px;top:489px;width:123px;height:17px"></div>
<span class="t" style="left:552.00px;top:490.84px;transform:scaleX(0.8900)">Campo libero 1</span>
<span class="t" style="left:412.30px;top:491.84px;transform:scaleX(0.8719)">Descrizione campo libero 1 :</span>
<div class="in" style="left:549px;top:511px;width:123px;height:17px"></div>
<span class="t" style="left:552.00px;top:512.84px;transform:scaleX(0.8900)">Campo libero 2</span>
<span class="t" style="left:412.30px;top:513.84px;transform:scaleX(0.8719)">Descrizione campo libero 2 :</span>
<div class="in" style="left:549px;top:535px;width:123px;height:17px"></div>
<span class="t" style="left:552.00px;top:536.84px;transform:scaleX(0.8900)">Campo libero 3</span>
<span class="t" style="left:412.30px;top:537.84px;transform:scaleX(0.8719)">Descrizione campo libero 3 :</span>
<!-- hand drawn red ellipse -->
<svg style="position:absolute;left:0;top:320px" width="140" height="80" viewBox="0 320 140 80">
<defs><filter id="sf" x="-10%" y="-10%" width="120%" height="120%"><feGaussianBlur stdDeviation="0.7"/></filter></defs>
<path d="M33.4 342.3C37.2 340.7 41.6 339.3 46.0 338.3C50.4 337.3 55.8 337.1 60.0 336.5C64.2 335.9 67.7 335.0 71.5 334.4C75.3 333.8 79.2 333.1 83.0 332.7C86.8 332.3 90.8 332.0 94.6 332.1C98.4 332.2 102.5 332.6 106.0 333.3C109.5 334.0 112.9 334.7 115.4 336.1C117.9 337.5 119.8 340.0 121.1 341.9C122.3 343.8 123.1 345.6 122.9 347.7C122.7 349.8 121.8 352.3 120.0 354.6C118.2 356.9 115.3 359.2 112.0 361.5C108.7 363.8 104.3 366.4 100.4 368.4C96.5 370.4 92.7 372.0 88.8 373.6C84.9 375.2 81.1 376.8 77.3 378.2C73.5 379.6 70.0 380.9 65.8 382.3C61.6 383.7 56.6 385.6 52.0 386.7C47.4 387.8 42.2 388.8 38.0 389.0C33.8 389.2 30.2 388.9 26.5 387.9C22.8 386.8 18.8 384.9 16.0 382.7C13.2 380.5 11.0 377.5 9.8 374.6C8.6 371.7 7.9 368.5 8.6 365.4C9.3 362.3 11.4 358.9 13.8 356.0C16.2 353.1 19.7 350.3 23.0 348.0C26.3 345.7 29.6 343.9 33.4 342.3Z" fill="none" stroke="#EA3248" stroke-opacity=".8" stroke-width="6.8" stroke-linejoin="round" filter="url(#sf)"/>
</svg>
</div>
</body>
</html>
